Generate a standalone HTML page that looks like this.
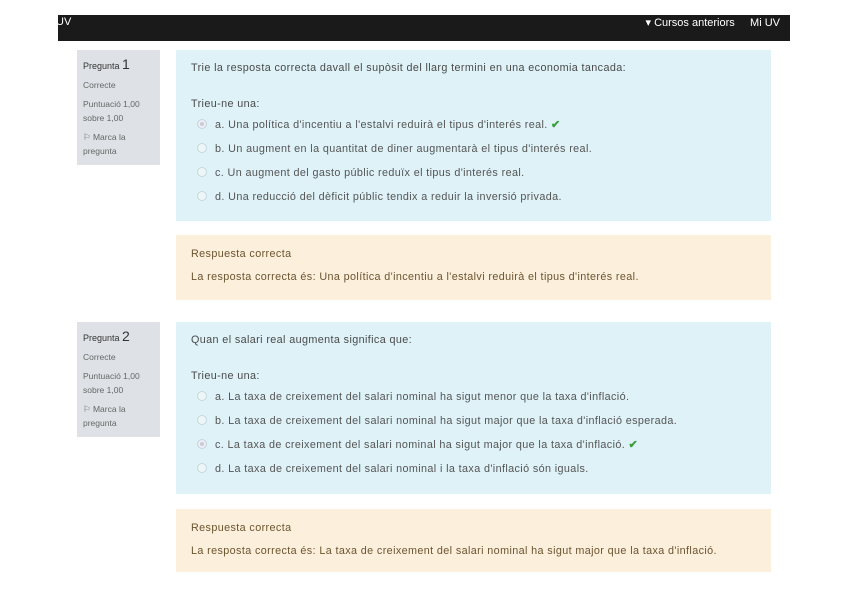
<!DOCTYPE html>
<html><head><meta charset="utf-8"><style>
body{margin:0;width:848px;height:599px;background:#fff;font-family:"Liberation Sans",sans-serif;color:#444;position:relative;overflow:hidden}
.nav{position:absolute;left:58px;top:15px;width:732px;height:26px;background:#1a1a1a;color:#fff;font-size:11px}
.nav .l{position:absolute;left:-2px;top:1px}
.nav .r{position:absolute;right:10px;top:1px}
.info{position:absolute;left:77px;width:83px;height:115px;background:#dee2e6;font-size:8.5px;color:#666;box-sizing:border-box;padding:7px 6px;line-height:14px}
.info b{font-weight:normal;color:#333;font-size:9px}.info b span{font-size:14px}
.info p{margin:5px 0}
.q{position:absolute;left:176px;width:595px;background:#def2f8;font-size:10.8px;box-sizing:border-box;padding:12px 15px;letter-spacing:0.38px;color:#4a4a4a}
.q .opt{margin:0 0 0 6px;height:24px;line-height:24px;color:#555}
.q .opt i{display:inline-block;width:8px;height:8px;border-radius:50%;border:1px solid #c8d6da;background:#eef6f8;vertical-align:-1px;margin-right:8px}
.q .opt i.s{background:#ccc;box-shadow:inset 0 0 0 2px #eef}
.ck{color:#3a9e3a;font-weight:bold}
.fb{position:absolute;left:176px;width:595px;background:#fcefdc;font-size:10.8px;color:#6b5530;box-sizing:border-box;padding:8px 15px;line-height:23px;letter-spacing:0.38px}
</style></head><body>
<div class="nav"><span class="l">UV</span><span class="r">▾ Cursos anteriors &nbsp;&nbsp;&nbsp; Mi UV</span></div>

<div class="info" style="top:50px"><b>Pregunta <span>1</span></b><p>Correcte</p><p>Puntuació 1,00 sobre 1,00</p><p>⚐ Marca la pregunta</p></div>
<div class="q" style="top:50px;height:171px">
<div>Trie la resposta correcta davall el supòsit del llarg termini en una economia tancada:</div>
<div style="margin-top:24px">Trieu-ne una:</div>
<div class="opt" style="margin-top:3px"><i class="s"></i>a. Una política d'incentiu a l'estalvi reduirà el tipus d'interés real. <span class="ck">✔</span></div>
<div class="opt"><i></i>b. Un augment en la quantitat de diner augmentarà el tipus d'interés real.</div>
<div class="opt"><i></i>c. Un augment del gasto públic reduïx el tipus d'interés real.</div>
<div class="opt"><i></i>d. Una reducció del dèficit públic tendix a reduir la inversió privada.</div>
</div>
<div class="fb" style="top:235px;height:65px">Respuesta correcta<br>La resposta correcta és: Una política d'incentiu a l'estalvi reduirà el tipus d'interés real.</div>

<div class="info" style="top:322px"><b>Pregunta <span>2</span></b><p>Correcte</p><p>Puntuació 1,00 sobre 1,00</p><p>⚐ Marca la pregunta</p></div>
<div class="q" style="top:322px;height:172px">
<div>Quan el salari real augmenta significa que:</div>
<div style="margin-top:24px">Trieu-ne una:</div>
<div class="opt" style="margin-top:3px"><i></i>a. La taxa de creixement del salari nominal ha sigut menor que la taxa d'inflació.</div>
<div class="opt"><i></i>b. La taxa de creixement del salari nominal ha sigut major que la taxa d'inflació esperada.</div>
<div class="opt"><i class="s"></i>c. La taxa de creixement del salari nominal ha sigut major que la taxa d'inflació. <span class="ck">✔</span></div>
<div class="opt"><i></i>d. La taxa de creixement del salari nominal i la taxa d'inflació són iguals.</div>
</div>
<div class="fb" style="top:509px;height:63px">Respuesta correcta<br>La resposta correcta és: La taxa de creixement del salari nominal ha sigut major que la taxa d'inflació.</div>
</body></html>
